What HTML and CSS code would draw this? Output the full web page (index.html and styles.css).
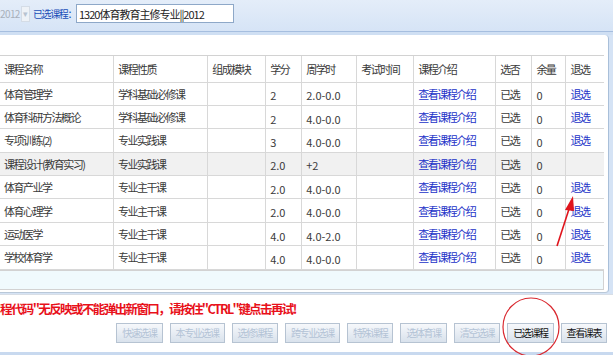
FILE: index.html
```html
<!DOCTYPE html>
<html lang="zh-CN">
<head>
  <meta charset="UTF-8" />
  <title>已选课程</title>
  <link rel="stylesheet" href="styles.css">
</head>
<body>
  <div class="page">
    <!-- search bar -->
    <div class="topbar">
      <div class="year-select">
        <span class="year">2012</span>
        <span class="arrow">&#9662;</span>
      </div>
      <span class="top-label">已选课程：</span>
      <input class="top-input" type="text" value="1320体育教育主修专业||2012" />
    </div>
    <div class="top-rule"></div>

    <!-- selected courses -->
    <div class="panel">
      <div class="grid-wrap">
        <table class="grid">
          <colgroup>
            <col style="width:114px">
            <col style="width:94px">
            <col style="width:58px">
            <col style="width:36px">
            <col style="width:55px">
            <col style="width:57px">
            <col style="width:82px">
            <col style="width:36px">
            <col style="width:34px">
            <col style="width:38px">
          </colgroup>
          <tr class="head">
            <td>课程名称</td><td>课程性质</td><td>组成模块</td><td>学分</td><td>周学时</td>
            <td>考试时间</td><td>课程介绍</td><td>选否</td><td>余量</td><td>退选</td>
          </tr>
          <tr>
            <td>体育管理学</td><td>学科基础必修课</td><td></td><td class="num">2</td><td class="num">2.0-0.0</td>
            <td></td><td><a href="#">查看课程介绍</a></td><td>已选</td><td class="num">0</td><td><a href="#">退选</a></td>
          </tr>
          <tr>
            <td>体育科研方法概论</td><td>学科基础必修课</td><td></td><td class="num">2</td><td class="num">4.0-0.0</td>
            <td></td><td><a href="#">查看课程介绍</a></td><td>已选</td><td class="num">0</td><td><a href="#">退选</a></td>
          </tr>
          <tr>
            <td>专项训练(2)</td><td>专业实践课</td><td></td><td class="num">3</td><td class="num">4.0-0.0</td>
            <td></td><td><a href="#">查看课程介绍</a></td><td>已选</td><td class="num">0</td><td><a href="#">退选</a></td>
          </tr>
          <tr class="shade">
            <td>课程设计(教育实习)</td><td>专业实践课</td><td></td><td class="num">2.0</td><td class="num">+2</td>
            <td></td><td><a href="#">查看课程介绍</a></td><td>已选</td><td class="num">0</td><td></td>
          </tr>
          <tr>
            <td>体育产业学</td><td>专业主干课</td><td></td><td class="num">2.0</td><td class="num">4.0-0.0</td>
            <td></td><td><a href="#">查看课程介绍</a></td><td>已选</td><td class="num">0</td><td><a href="#">退选</a></td>
          </tr>
          <tr>
            <td>体育心理学</td><td>专业主干课</td><td></td><td class="num">2.0</td><td class="num">4.0-0.0</td>
            <td></td><td><a href="#">查看课程介绍</a></td><td>已选</td><td class="num">0</td><td><a href="#">退选</a></td>
          </tr>
          <tr>
            <td>运动医学</td><td>专业主干课</td><td></td><td class="num">4.0</td><td class="num">4.0-2.0</td>
            <td></td><td><a href="#">查看课程介绍</a></td><td>已选</td><td class="num">0</td><td><a href="#">退选</a></td>
          </tr>
          <tr>
            <td>学校体育学</td><td>专业主干课</td><td></td><td class="num">4.0</td><td class="num">4.0-0.0</td>
            <td></td><td><a href="#">查看课程介绍</a></td><td>已选</td><td class="num">0</td><td><a href="#">退选</a></td>
          </tr>
        </table>
        <div class="grid-foot"></div>
      </div>
    </div>

    <!-- footer -->
    <div class="footer">
      <p class="warn">程代码"无反映或不能弹出新窗口，请按住"CTRL"键点击再试!</p>
      <div class="buttons">
        <button class="btn off">快速选课</button>
        <button class="btn off">本专业选课</button>
        <button class="btn off">选修课程</button>
        <button class="btn off">跨专业选课</button>
        <button class="btn off">特殊课程</button>
        <button class="btn off">选体育课</button>
        <button class="btn off">清空选课</button>
        <button class="btn">已选课程</button>
        <button class="btn">查看课表</button>
      </div>
    </div>

    <!-- red annotations -->
    <svg class="marks" width="613" height="355" viewBox="0 0 613 355">
      <ellipse cx="531" cy="327" rx="28" ry="29" fill="none" stroke="#d9282f" stroke-width="1.2"/>
      <line x1="557" y1="246" x2="570" y2="206" stroke="#e0141c" stroke-width="1.6"/>
      <polygon points="573,196 565,210 574,211" fill="#e0141c"/>
    </svg>
  </div>
</body>
</html>
```

FILE: styles.css
```css
* {
  margin: 0;
  padding: 0;
  box-sizing: border-box;
}

body {
  width: 613px;
  height: 355px;
  overflow: hidden;
  background: #d5e3f5;
  font-family: "Noto Sans CJK SC", "Noto Sans", sans-serif;
  font-size: 11px;
  color: #333;
}

.page {
  position: relative;
  height: 355px;
  display: flex;
  flex-direction: column;
}

/* top bar */
.topbar {
  height: 31px;
  display: flex;
  align-items: center;
  background: linear-gradient(#e4edf9, #d6e4f6);
  padding-bottom: 4px;
}

.year-select {
  display: flex;
  align-items: center;
  height: 18px;
  width: 30px;
}

.year {
  color: #a8b0bb;
  font-size: 10px;
  letter-spacing: -0.6px;
}

.arrow {
  width: 9px;
  height: 16px;
  margin-left: 1px;
  display: flex;
  align-items: center;
  justify-content: center;
  font-size: 9px;
  color: #b7c3d1;
  background: #eef2f7;
  border: 1px solid #d4dce6;
}

.top-label {
  margin-left: 3px;
  color: #1a4fb8;
  font-size: 10px;
  letter-spacing: -1.4px;
}

.top-input {
  margin-left: 0;
  width: 158px;
  height: 19px;
  border: 1px solid #8ea8c8;
  background: #fff;
  font-family: "Noto Sans CJK SC", "Noto Sans", sans-serif;
  font-size: 11px;
  letter-spacing: -1px;
  color: #222;
  padding-left: 2px;
}

.top-rule {
  height: 4px;
  border-top: 1px solid #a6bedf;
  background: #cfdff3;
}

/* panel with the grid */
.panel {
  background: #fff;
  margin-right: 4px;
  border-right: 1px solid #a9bfd9;
  border-bottom: 1px solid #b9c8d8;
  border-top-right-radius: 4px;
  border-bottom-right-radius: 4px;
  padding: 20px 4px 2px 0;
}

.grid-wrap {
  margin-left: -1px;
  border: 1px solid #d2d2d2;
  border-left: none;
}

.grid {
  width: 605px;
  border-collapse: collapse;
  table-layout: fixed;
  background: #fff;
}

.grid td {
  height: 23.4px;
  border: 1px solid #d8d8d8;
  padding: 0 0 0 4px;
  white-space: nowrap;
  overflow: hidden;
  letter-spacing: -1.5px;
  color: #3a3a3a;
}

.grid tr:first-child td {
  border-top: none;
}

.grid tr td:last-child {
  border-right: none;
}

.grid .head td {
  height: 26px;
}

.grid tr.shade td {
  background: #f1f1f1;
}

.grid td.num {
  letter-spacing: 0;
  padding-top: 3px;
}

.grid a {
  color: #2232c8;
  text-decoration: none;
}

.grid-foot {
  height: 19px;
  background: #f0fafd;
  border-top: 1px solid #d2d2d2;
}

/* footer */
.footer {
  flex: 1;
  background: #fff;
  margin-top: 1px;
  border-top: 1px solid #d8dee6;
  border-bottom: 3px solid #c8d9ef;
  padding-top: 5px;
}

.warn {
  color: #e8101a;
  font-weight: bold;
  font-size: 12.5px;
  letter-spacing: -1.6px;
  line-height: 17px;
  white-space: nowrap;
}

.buttons {
  display: flex;
  justify-content: flex-end;
  gap: 7px;
  margin-top: 6px;
  padding-right: 6px;
}

.btn {
  height: 20px;
  padding: 0 5px;
  border: 1px solid #b6c3d2;
  background: linear-gradient(#f6f8fb, #d9e2ec);
  font-family: "Noto Sans CJK SC", "Noto Sans", sans-serif;
  font-size: 10px;
  letter-spacing: -1.4px;
  color: #111;
}

.btn.off {
  color: #b3c3d6;
}

.marks {
  position: absolute;
  left: 0;
  top: 0;
  pointer-events: none;
}
```
